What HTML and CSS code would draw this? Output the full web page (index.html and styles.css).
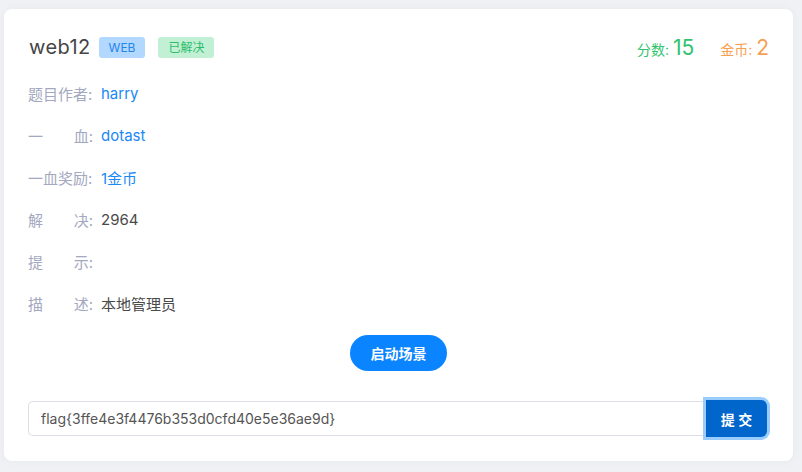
FILE: index.html
```html
<!DOCTYPE html>
<html lang="zh-CN">
<head>
  <meta charset="UTF-8">
  <title>web12</title>
  <link rel="stylesheet" href="styles.css">
</head>
<body>
  <div class="page">
    <div class="card">
      <!-- Header: title, tags, score -->
      <div class="card-head">
        <div class="title-wrap">
          <span class="title">web12</span>
          <span class="tag tag-type">WEB</span>
          <span class="tag tag-solved">已解决</span>
        </div>
        <div class="score">
          <span class="score-item green">分数: <b>15</b></span>
          <span class="score-item orange">金币: <b>2</b></span>
        </div>
      </div>

      <!-- Info rows -->
      <ul class="info">
        <li><span class="label"><span>题目作者:</span></span><span class="value link">harry</span></li>
        <li><span class="label"><span>一</span><span>血:</span></span><span class="value link">dotast</span></li>
        <li><span class="label"><span>一血奖励:</span></span><span class="value link">1金币</span></li>
        <li><span class="label"><span>解</span><span>决:</span></span><span class="value">2964</span></li>
        <li><span class="label"><span>提</span><span>示:</span></span><span class="value"></span></li>
        <li><span class="label"><span>描</span><span>述:</span></span><span class="value">本地管理员</span></li>
      </ul>

      <div class="actions">
        <button class="btn-start">启动场景</button>
      </div>

      <!-- Flag submit -->
      <form class="flag-form">
        <input class="flag-input" type="text" value="flag{3ffe4e3f4476b353d0cfd40e5e36ae9d}">
        <button type="button" class="btn-submit">提 交</button>
      </form>
    </div>
  </div>
</body>
</html>
```

FILE: styles.css
```css
* { box-sizing: border-box; }

body {
  margin: 0;
  background: #eff1f4;
  font-family: Inter, "Noto Sans CJK SC", sans-serif;
  color: #444;
}

.page { padding: 9px 9px 11px 4px; }

.card {
  background: #fff;
  border-radius: 8px;
  box-shadow: 0 0 10px rgba(0, 0, 0, 0.04);
  height: 452px;
  padding: 18px 24px 25px 24px;
}

/* Header */
.card-head {
  display: flex;
  justify-content: space-between;
  align-items: center;
  height: 40px;
}
.title-wrap { display: flex; align-items: center; }
.title {
  font-size: 20px;
  color: #454545;
  margin-left: 1px;
  margin-right: 8px;
  letter-spacing: 0.4px;
}
.tag {
  font-size: 12px;
  height: 21px;
  line-height: 21px;
  padding: 0 10px;
  border-radius: 3px;
  margin-right: 13px;
}
.tag-type { background: #b3d8ff; color: #1f86ee; }
.tag-solved { background: #c2f0d5; color: #2fbd6c; }

.score { display: flex; align-items: baseline; }
.score-item { font-size: 14px; margin-left: 26px; }
.score-item b { font-size: 21px; font-weight: 400; }
.green { color: #2ec46d; }
.orange { color: #f7a054; }

/* Info rows */
.info {
  list-style: none;
  margin: 5px 0 0 0;
  padding: 0;
}
.info li {
  display: flex;
  align-items: center;
  height: 42px;
  font-size: 15px;
}
.label {
  display: flex;
  justify-content: space-between;
  width: 65px;
  color: #a3a8c0;
  margin-right: 8px;
  white-space: nowrap;
}
.value { color: #4a4a4a; }
.value.link { color: #1a88f5; }

/* Start button */
.actions {
  display: flex;
  justify-content: center;
  margin-top: 11px;
}
.btn-start {
  width: 97px;
  height: 36px;
  border: none;
  border-radius: 18px;
  background: #0a84ff;
  color: #fff;
  font-family: inherit;
  font-size: 14px;
  font-weight: bold;
  cursor: pointer;
}

/* Flag form */
.flag-form {
  display: flex;
  align-items: center;
  margin-top: 29px;
  padding-right: 2px;
}
.flag-input {
  flex: 1;
  height: 35px;
  border: 1px solid #dcdfe6;
  border-right: none;
  border-radius: 5px 0 0 5px;
  padding: 0 12px;
  font-family: inherit;
  font-size: 14px;
  color: #555;
  outline: none;
}
.btn-submit {
  width: 61px;
  height: 37px;
  border: none;
  border-radius: 0 6px 6px 0;
  background: #0066cc;
  color: #fff;
  font-family: inherit;
  font-size: 14px;
  font-weight: bold;
  box-shadow: 0 0 0 3px #99ccff;
  cursor: pointer;
}
```
